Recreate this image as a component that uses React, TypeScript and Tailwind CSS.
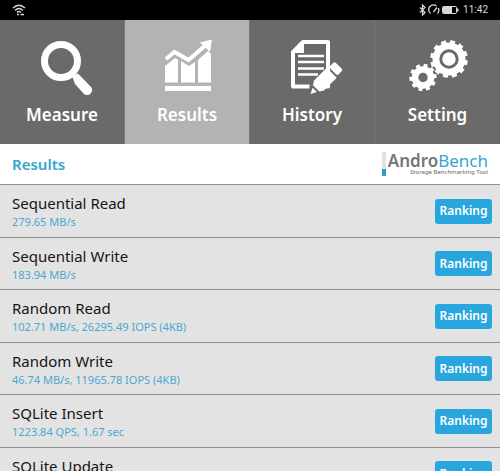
import { type ReactNode } from "react";

const MeasureIcon = () => (
  <svg viewBox="30 15 64 60" className="h-[60px] w-[64px]" aria-hidden="true">
    <circle cx="61" cy="41" r="16.5" fill="none" stroke="#fff" strokeWidth="7" />
    <path d="M72 56 L78 53.5 L91 67 A5 5 0 0 1 84 74 L75 64 Z" fill="#fff" />
  </svg>
);

const ResultsIcon = () => (
  <svg viewBox="30 15 64 60" className="h-[60px] w-[64px]" aria-hidden="true">
    <g fill="#fff">
      <path d="M40 46 L50 38 L53 39.5 V62.5 H40 Z" />
      <path d="M56 41 L64 46 L70 42 V62.5 H56 Z" />
      <path d="M73 40 L83 31 L86 34 V62.5 H73 Z" />
      <rect x="40" y="66" width="46" height="5" />
    </g>
    <path d="M41 40 L49.5 32.5 L63.5 40.5 L82 24.5" fill="none" stroke="#b3b3b3" strokeWidth="6.5" />
    <path d="M41 39 L49.5 32 L63.5 40 L82 24" fill="none" stroke="#fff" strokeWidth="4" />
    <path d="M87 19.5 L85 32 L75 22.5 Z" fill="#fff" />
  </svg>
);

const HistoryIcon = () => (
  <svg viewBox="30 15 64 60" className="h-[60px] w-[64px]" aria-hidden="true">
    <path d="M53 22 H78 V66.5 H43 V32 Z" fill="none" stroke="#fff" strokeWidth="4" strokeLinejoin="round" />
    <path d="M42 33 L54 21 V33 Z" fill="#fff" />
    <path d="M48 36 H74 M48 42 H74 M48 48.5 H74 M48 54.5 H68" stroke="#fff" strokeWidth="2.5" />
    <g transform="translate(60.5 74) rotate(-45)">
      <path d="M-3 0 L7 -8 H14 V6 H7 Z" fill="#6a6a6a" />
      <path d="M0 0 L6 -3 V3 Z" fill="#fff" />
      <path d="M8 -4.5 L12 -7 H30 V7 H12 L8 4.5 Z" fill="#fff" />
      <rect x="32" y="-6" width="8" height="12" rx="2" fill="#fff" />
    </g>
  </svg>
);

type GearProps = { x: number; y: number; r: number; teeth: number; width: number };

const Gear = ({ x, y, r, teeth, width }: GearProps) => (
  <g transform={`translate(${x} ${y})`} fill="#fff">
    <circle r={r} />
    {Array.from({ length: teeth }, (_, i) => (
      <rect
        key={i}
        x={-width / 2}
        y={-r - 2.3}
        width={width}
        height="5"
        transform={`rotate(${(i * 360) / teeth + 12})`}
      />
    ))}
  </g>
);

const SettingIcon = () => (
  <svg viewBox="30 15 64 60" className="h-[60px] w-[64px]" aria-hidden="true">
    <Gear x={73} y={39} r={16.5} teeth={12} width={5} />
    <circle cx="73" cy="39" r="8.2" fill="none" stroke="#6a6a6a" strokeWidth="3" />
    <Gear x={47} y={57.5} r={11.3} teeth={10} width={4} />
    <circle cx="47" cy="57.5" r="4.7" fill="#6a6a6a" />
  </svg>
);

const TABS: { label: string; icon: ReactNode; active?: boolean }[] = [
  { label: "Measure", icon: <MeasureIcon /> },
  { label: "Results", icon: <ResultsIcon />, active: true },
  { label: "History", icon: <HistoryIcon /> },
  { label: "Setting", icon: <SettingIcon /> },
];

const RESULTS = [
  { name: "Sequential Read", value: "279.65 MB/s" },
  { name: "Sequential Write", value: "183.94 MB/s" },
  { name: "Random Read", value: "102.71 MB/s, 26295.49 IOPS (4KB)" },
  { name: "Random Write", value: "46.74 MB/s, 11965.78 IOPS (4KB)" },
  { name: "SQLite Insert", value: "1223.84 QPS, 1.67 sec" },
  { name: "SQLite Update", value: "" },
];

const StatusBar = () => (
  <div className="flex h-5 shrink-0 items-center justify-between bg-black px-3 text-[#d8d8d8]">
    <svg viewBox="0 0 14 12" className="h-3 w-[14px]" fill="none" stroke="currentColor" strokeWidth="1.3" aria-hidden="true">
      <path d="M1 4 Q7 -1.5 13 4 M3 6.5 Q7 2.5 11 6.5 M5 8.5 Q7 6.5 9 8.5" />
      <path d="M5 10.5 H7 M8.5 10.5 H12" strokeWidth="1.6" />
    </svg>
    <div className="flex items-center gap-0.5">
      <svg viewBox="0 0 7 12" className="h-3 w-[7px]" fill="none" stroke="currentColor" strokeWidth="1.2" aria-hidden="true">
        <path d="M1 3.5 L6 8.5 L3.5 11 V1 L6 3.5 L1 8.5" />
      </svg>
      <svg viewBox="0 0 12 12" className="h-3 w-3" fill="none" stroke="currentColor" strokeWidth="1.3" aria-hidden="true">
        <path d="M2.5 9.5 A4.7 4.7 0 0 1 8.5 2 M10.3 4 A4.7 4.7 0 0 1 9.5 9.5 M5.5 8 L9 3.5" />
      </svg>
      <svg viewBox="0 0 17 8" className="h-2 w-[17px]" aria-hidden="true">
        <rect x="0.5" y="0.5" width="14" height="7" rx="1" fill="none" stroke="currentColor" />
        <rect x="1" y="1" width="9" height="6" fill="currentColor" />
        <rect x="15" y="2.5" width="1.5" height="3" fill="currentColor" />
      </svg>
      <span className="pl-0.5 font-[Roboto,sans-serif] text-[10px] leading-5">11:42</span>
    </div>
  </div>
);

const Logo = () => (
  <div className="flex items-stretch gap-0.5">
    <div className="flex w-1 flex-col bg-[#e2e2e2]">
      <div className="mt-auto h-[7px] bg-[#2b9fd0]" />
    </div>
    <div className="flex flex-col items-end">
      <span className="text-[17px] leading-[17px] text-[#35a5cd]">
        <span className="font-semibold text-[#777]">Andro</span>Bench
      </span>
      <span className="text-[6px] leading-[7px] text-[#666]">Storage Benchmarking Tool</span>
    </div>
  </div>
);

export default function App() {
  return (
    <div className="flex h-screen flex-col overflow-hidden bg-[#e3e3e3] font-['Noto_Sans',sans-serif]">
      <StatusBar />

      <nav className="grid shrink-0 grid-cols-4 bg-[#6a6a6a]">
        {TABS.map((tab) => (
          <button
            key={tab.label}
            type="button"
            className={`flex h-[124px] flex-col items-center border-r border-[#777] pt-[15px] text-white last:border-r-0 ${
              tab.active ? "bg-[#b3b3b3]" : ""
            }`}
          >
            {tab.icon}
            <span className="mt-2 text-[17px] leading-6 font-semibold">{tab.label}</span>
          </button>
        ))}
      </nav>

      <header className="flex h-[41px] shrink-0 items-center justify-between border-b border-[#8e8e8e] bg-white px-3">
        <h1 className="text-[15px] font-semibold text-[#35a5cd]">Results</h1>
        <Logo />
      </header>

      <ul>
        {RESULTS.map((result) => (
          <li
            key={result.name}
            className="flex items-center justify-between border-b border-[#8e8e8e] pl-3 pr-2 odd:h-[53px] even:h-[52px]"
          >
            <div className="h-[38px]">
              <div className="text-[15px] leading-[22px] text-[#151515]">{result.name}</div>
              <div className="text-[11px] leading-4 text-[#4aa8d0]">{result.value}</div>
            </div>
            <button
              type="button"
              className="h-[25px] w-[57px] rounded-[3px] bg-[#29a6dd] text-[12px] leading-none font-semibold text-white"
            >
              Ranking
            </button>
          </li>
        ))}
      </ul>
    </div>
  );
}
